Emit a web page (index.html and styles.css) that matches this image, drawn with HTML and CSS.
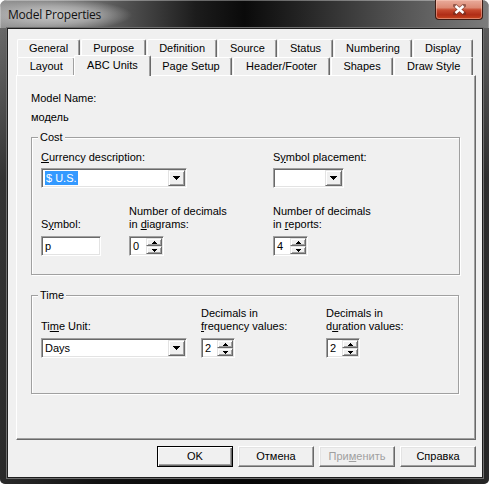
FILE: index.html
```html
<!DOCTYPE html>
<html>
<head>
<meta charset="utf-8">
<title>Model Properties</title>
<link rel="stylesheet" href="styles.css">
</head>
<body>
<div class="window">
  <div class="titlebar">
    <span class="title">Model Properties</span>
    <div class="close">
      <svg width="13" height="11" viewBox="0 0 13 11">
        <path d="M2 1.5L11 9.5M11 1.5L2 9.5" stroke="#5a2a20" stroke-width="4" stroke-linecap="square" fill="none" opacity="0.55"/>
        <path d="M2.5 2L10.5 9M10.5 2L2.5 9" stroke="#fff" stroke-width="2.4" fill="none"/>
      </svg>
    </div>
  </div>
  <div class="framebody">
    <div class="client">
      <div class="tabs">
        <div class="tabrow">
          <div class="tab">General</div>
          <div class="tab">Purpose</div>
          <div class="tab">Definition</div>
          <div class="tab">Source</div>
          <div class="tab">Status</div>
          <div class="tab">Numbering</div>
          <div class="tab">Display</div>
        </div>
        <div class="tabrow">
          <div class="tab">Layout</div>
          <div class="tab active">ABC Units</div>
          <div class="tab">Page Setup</div>
          <div class="tab">Header/Footer</div>
          <div class="tab">Shapes</div>
          <div class="tab">Draw Style</div>
        </div>
      </div>
      <div class="panel">
        <div class="lbl mn">Model Name:</div>
        <div class="lbl mv">модель</div>

        <div class="group cost">
          <span class="gtitle">Cost</span>
          <div class="grid cost-grid">
            <div class="field span2 g4">
              <div class="lbl"><u>C</u>urrency description:</div>
              <div class="combo w146">
                <span class="ctext"><span class="sel">$ U.S.</span></span>
                <span class="dd"><svg width="7" height="4" viewBox="0 0 7 4"><path d="M0 0H7V1H6V2H5V3H4V4H3V3H2V2H1V1H0Z"/></svg></span>
              </div>
            </div>
            <div class="field g4">
              <div class="lbl">S<u>y</u>mbol placement:</div>
              <div class="combo w71">
                <span class="ctext"></span>
                <span class="dd"><svg width="7" height="4" viewBox="0 0 7 4"><path d="M0 0H7V1H6V2H5V3H4V4H3V3H2V2H1V1H0Z"/></svg></span>
              </div>
            </div>
            <div class="field g5 r2">
              <div class="lbl">S<u>y</u>mbol:</div>
              <div class="edit w60">р</div>
            </div>
            <div class="field g5 r2">
              <div class="lbl">Number of decimals<br>in <u>d</u>iagrams:</div>
              <div class="spin w35">
                <span class="val">0</span>
                <span class="btns">
                  <span class="sb"><svg width="5" height="3" viewBox="0 0 5 3"><path d="M2 0H3V1H4V2H5V3H0V2H1V1H2Z"/></svg></span>
                  <span class="sb"><svg width="5" height="3" viewBox="0 0 5 3"><path d="M0 0H5V1H4V2H3V3H2V2H1V1H0Z"/></svg></span>
                </span>
              </div>
            </div>
            <div class="field g5 r2">
              <div class="lbl">Number of decimals<br>in <u>r</u>eports:</div>
              <div class="spin w35">
                <span class="val">4</span>
                <span class="btns">
                  <span class="sb"><svg width="5" height="3" viewBox="0 0 5 3"><path d="M2 0H3V1H4V2H5V3H0V2H1V1H2Z"/></svg></span>
                  <span class="sb"><svg width="5" height="3" viewBox="0 0 5 3"><path d="M0 0H5V1H4V2H3V3H2V2H1V1H0Z"/></svg></span>
                </span>
              </div>
            </div>
          </div>
        </div>

        <div class="group time">
          <span class="gtitle">Time</span>
          <div class="grid time-grid">
            <div class="field g5">
              <div class="lbl">Ti<u>m</u>e Unit:</div>
              <div class="combo w146">
                <span class="ctext">Days</span>
                <span class="dd"><svg width="7" height="4" viewBox="0 0 7 4"><path d="M0 0H7V1H6V2H5V3H4V4H3V3H2V2H1V1H0Z"/></svg></span>
              </div>
            </div>
            <div class="field g5">
              <div class="lbl">Decimals in<br><u>f</u>requency values:</div>
              <div class="spin w34">
                <span class="val">2</span>
                <span class="btns">
                  <span class="sb"><svg width="5" height="3" viewBox="0 0 5 3"><path d="M2 0H3V1H4V2H5V3H0V2H1V1H2Z"/></svg></span>
                  <span class="sb"><svg width="5" height="3" viewBox="0 0 5 3"><path d="M0 0H5V1H4V2H3V3H2V2H1V1H0Z"/></svg></span>
                </span>
              </div>
            </div>
            <div class="field g5">
              <div class="lbl">Decimals in<br>d<u>u</u>ration values:</div>
              <div class="spin w34">
                <span class="val">2</span>
                <span class="btns">
                  <span class="sb"><svg width="5" height="3" viewBox="0 0 5 3"><path d="M2 0H3V1H4V2H5V3H0V2H1V1H2Z"/></svg></span>
                  <span class="sb"><svg width="5" height="3" viewBox="0 0 5 3"><path d="M0 0H5V1H4V2H3V3H2V2H1V1H0Z"/></svg></span>
                </span>
              </div>
            </div>
          </div>
        </div>
      </div>
      <div class="buttons">
        <div class="btn default">OK</div>
        <div class="btn">Отмена</div>
        <div class="btn disabled">При<u>м</u>енить</div>
        <div class="btn">Справка</div>
      </div>
    </div>
  </div>
</div>
</body>
</html>
```

FILE: styles.css
```css
* { box-sizing: border-box; }
html, body { margin: 0; padding: 0; background: #fff; }
body {
  width: 489px; height: 484px; overflow: hidden;
  font-family: "Liberation Sans", Arial, sans-serif;
  font-size: 11px; color: #000;
}
u { text-decoration: underline; text-underline-offset: 1px; }

.window {
  width: 489px; height: 484px;
  border-radius: 7px 7px 5px 5px;
  overflow: hidden;
  display: flex; flex-direction: column;
  background: linear-gradient(to right, #6a6a6a 0%, #2c2c2c 20%, #0e0e0e 50%, #262626 80%, #5e5e5e 100%);
}

.titlebar {
  height: 28px; flex: none;
  display: flex; align-items: flex-start;
  background:
    radial-gradient(ellipse 78px 16px at 54px 15px, rgba(205,205,205,0.95) 0%, rgba(185,185,185,0.7) 55%, rgba(170,170,170,0) 100%),
    linear-gradient(to right, #959595 0%, #676767 20%, #1c1c1c 40%, #0a0a0a 50%, #252525 62%, #555 82%, #7c7c7c 100%);
  box-shadow: inset 0 1px 0 rgba(255,255,255,0.35), inset 1px 0 0 rgba(255,255,255,0.25), inset -1px 0 0 rgba(255,255,255,0.25);
}
.title {
  font-family: "Open Sans", "Noto Sans", sans-serif;
  font-size: 12px; letter-spacing: -0.2px;
  color: #111; margin: 6px 0 0 8px; line-height: 17px;
}
.close {
  margin-left: auto; margin-right: 6px;
  width: 48px; height: 20px;
  border: 1px solid #3c1a12; border-top: none;
  border-radius: 0 0 4px 4px;
  background: linear-gradient(to bottom, #e9ab9b 0%, #dc8a74 40%, #c64a2f 52%, #b02d16 78%, #c7461f 100%);
  box-shadow: inset 0 0 0 1px rgba(255,210,195,0.45);
  display: flex; align-items: center; justify-content: center;
}

.framebody {
  flex: 1; padding: 0 6px 6px 7px;
  background: linear-gradient(to bottom, rgba(0,0,0,0) 0, rgba(0,0,0,0.5) 150px, rgba(0,0,0,0.6) 100%);
}
.client {
  height: 450px;
  background: #f0f0f0;
  border: 1px solid #1e1e1e;
  box-shadow: 0 0 0 1px #6e6e6e;
  padding-top: 10px;
}

.tabs { margin: 0 9px 0 9px; }
.tabrow { display: flex; gap: 1px; height: 18px; align-items: flex-start; }
.tab {
  flex: 1 1 auto;
  height: 18px; padding: 0 11px;
  text-align: center; line-height: 17px; white-space: nowrap;
  background: #f0f0f0;
  border-top: 1px solid #fff; border-left: 1px solid #fff; border-right: 1px solid #696969;
  border-radius: 2px 2px 0 0;
  box-shadow: inset -1px 0 0 #a0a0a0;
}
.tab.active {
  height: 21px; margin: -2px -2px 0 -2px; line-height: 19px;
  position: relative; z-index: 1;
}

.panel {
  margin: 0 6px 0 8px;
  height: 365px;
  border-left: 1px solid #fff; border-top: 1px solid #fff;
  border-right: 1px solid #696969; border-bottom: 1px solid #696969;
  box-shadow: inset -1px -1px 0 #a0a0a0;
  padding: 16px 0 0 14px;
}
.lbl { line-height: 13px; white-space: nowrap; }
.mv { margin-top: 6px; }

.group {
  position: relative;
  border: 1px solid #a0a0a0;
  box-shadow: inset 1px 1px 0 #fff, 1px 1px 0 #fff;
}
.gtitle {
  position: absolute; top: -7px; left: 6px;
  background: #f0f0f0; padding: 0 2px; line-height: 13px;
}
.cost { width: 429px; height: 138px; margin-top: 13px; padding: 13px 0 0 9px; }
.time { width: 428px; height: 99px; margin-top: 20px; padding: 11px 0 0 9px; }

.grid { display: grid; align-items: end; }
.cost-grid { grid-template-columns: 88px 144px auto; row-gap: 17px; }
.time-grid { grid-template-columns: 160px 125px auto; }
.span2 { grid-column: 1 / 3; }
.field { display: flex; flex-direction: column; align-items: flex-start; }
.g4 { gap: 4px; }
.g5 { gap: 5px; }

.combo, .edit, .spin {
  height: 20px; background: #fff;
  border: 1px solid; border-color: #a0a0a0 #fff #fff #a0a0a0;
  box-shadow: inset 1px 1px 0 #696969, inset -1px -1px 0 #e3e3e3;
  padding: 1px;
  display: flex; align-items: center;
}
.w146 { width: 146px; }
.w71 { width: 71px; }
.w60 { width: 60px; }
.w35 { width: 35px; }
.w34 { width: 34px; }
.edit { padding-left: 3px; }
.ctext { flex: 1; padding-left: 2px; line-height: 14px; height: 16px; display: flex; align-items: center; }
.sel { background: #3399ff; color: #fff; padding: 0 1px; line-height: 14px; }
.dd {
  width: 17px; height: 16px; flex: none;
  background: #f0f0f0;
  border: 1px solid; border-color: #e3e3e3 #696969 #696969 #e3e3e3;
  box-shadow: inset 1px 1px 0 #fff, inset -1px -1px 0 #a0a0a0;
  display: flex; align-items: center; justify-content: center;
}
.dd svg, .sb svg { display: block; fill: #000; }
.spin .val { flex: 1; padding-left: 2px; line-height: 16px; }
.spin .btns { width: 16px; height: 16px; display: flex; flex-direction: column; flex: none; }
.sb {
  flex: 1; background: #f0f0f0;
  border: 1px solid; border-color: #e3e3e3 #696969 #696969 #e3e3e3;
  box-shadow: inset 1px 1px 0 #fff, inset -1px -1px 0 #a0a0a0;
  display: flex; align-items: center; justify-content: center;
}

.buttons {
  display: flex; justify-content: flex-end; gap: 5px;
  margin-top: 6px; padding-right: 6px;
}
.btn {
  width: 76px; height: 21px;
  background: #f0f0f0;
  border: 1px solid; border-color: #fff #696969 #696969 #fff;
  box-shadow: inset -1px -1px 0 #a0a0a0, inset 1px 1px 0 #e3e3e3;
  display: flex; align-items: center; justify-content: center;
  line-height: 13px;
}
.btn.default {
  border: 1px solid #000;
  box-shadow: inset 1px 1px 0 #fff, inset -1px -1px 0 #696969, inset -2px -2px 0 #a0a0a0;
}
.btn.disabled { color: #a0a0a0; }
```
